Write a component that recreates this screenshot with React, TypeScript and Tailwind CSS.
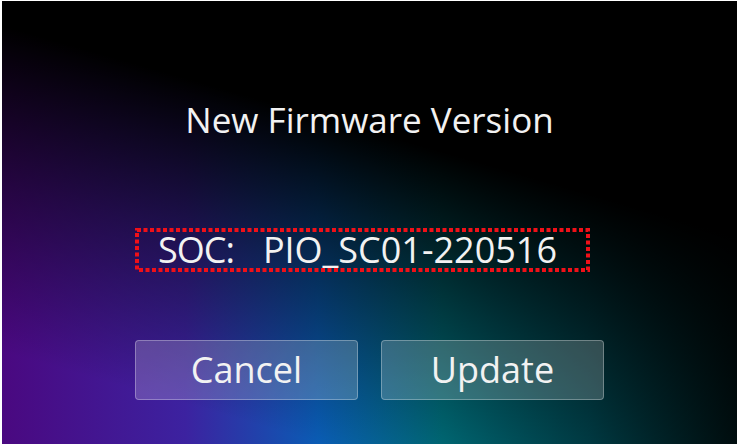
import React from "react";

export default function App() {
  return (
    <div className="w-[739px] h-[448px] bg-white pt-[1px] pl-[2px] pr-[2px] pb-[4px] flex">
      <div
        className="relative flex-1 flex flex-col items-center overflow-hidden bg-black bg-[linear-gradient(196deg,#000_36%,rgba(0,0,0,0.5)_60%,rgba(0,0,0,0)_86%),linear-gradient(90deg,#4a0880_0%,#3c22a0_25%,#0a5cb4_43%,#00717e_60%,#004a55_80%,#001416_100%)]"
        style={{ fontFamily: '"Open Sans", "Noto Sans", sans-serif' }}
      >
        <h1 className="mt-[98px] text-[35px] leading-[42px] text-[#f2f2f2] font-normal">
          New Firmware Version
        </h1>
        <div className="relative mt-[87px] mr-[14px] w-[455px] h-[44px] flex items-center pl-[23px]">
          <svg className="absolute inset-0" width="455" height="44" viewBox="0 0 455 44">
            <rect
              x="2"
              y="2"
              width="451"
              height="40"
              fill="none"
              stroke="#f01018"
              strokeWidth="4"
              strokeDasharray="4 2.5"
            />
          </svg>
          <span className="relative flex text-[36px] leading-[44px] text-[#f2f2f2]">
            <span className="tracking-[-1px]">SOC:</span>
            <span className="ml-[29px]">PIO_SC01-220516</span>
          </span>
        </div>
        <div className="mt-[68px] flex gap-[23px]">
          <button className="w-[223px] h-[60px] rounded-[4px] border border-white/30 bg-white/20 text-[36px] leading-[58px] text-[#f2f2f2]">
            Cancel
          </button>
          <button className="w-[223px] h-[60px] rounded-[4px] border border-white/30 bg-white/20 text-[36px] leading-[58px] text-[#f2f2f2]">
            Update
          </button>
        </div>
      </div>
    </div>
  );
}
